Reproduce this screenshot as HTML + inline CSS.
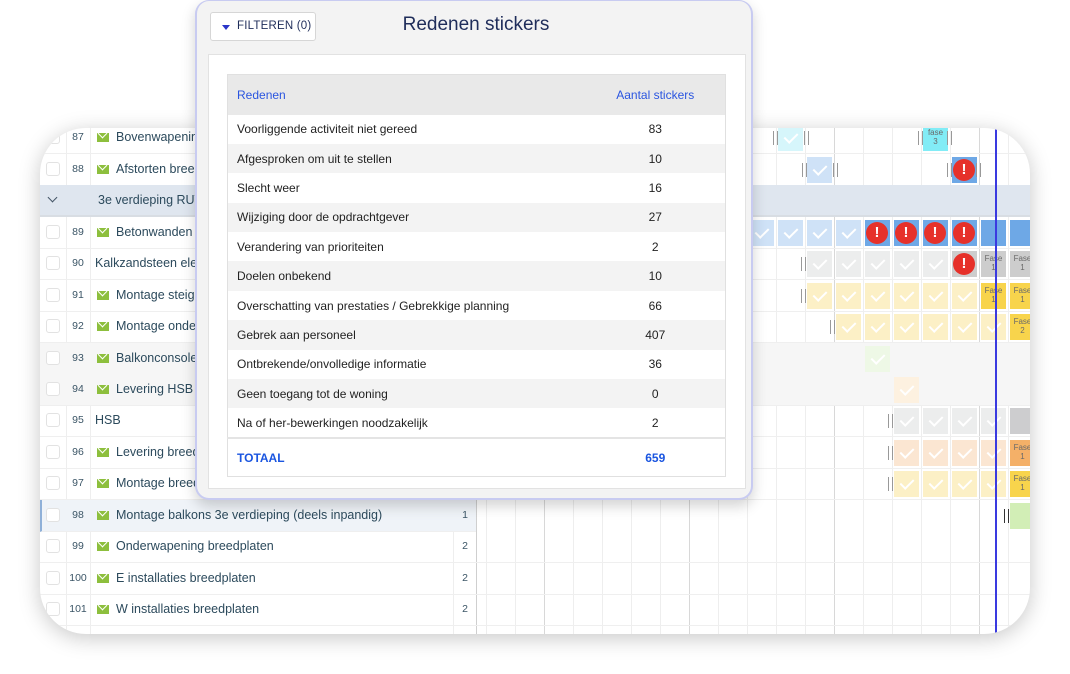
<!DOCTYPE html>
<html><head><meta charset="utf-8">
<style>
*{box-sizing:border-box;margin:0;padding:0}
body{width:1070px;height:674px;background:#fff;position:relative;overflow:hidden;font-family:"Liberation Sans",sans-serif}
.card{position:absolute;left:40px;top:128px;width:990px;height:506px;border-radius:46px;overflow:hidden;background:#fff;box-shadow:0 4px 22px rgba(0,0,0,.22)}
.in{position:absolute;left:-40px;top:-128px;width:1070px;height:674px}
.row{position:absolute;left:40px;width:1000px;height:31.5px;border-bottom:1px solid #efefef}
.row .cb{position:absolute;left:6px;top:8px;width:14px;height:14px;border:1px solid #e2e2e2;border-radius:3px;background:#fff}
.row .n{position:absolute;left:26px;width:24px;top:0;line-height:31px;text-align:center;font-size:10.5px;color:#3b5566}
.row .t{position:absolute;left:55px;top:0;line-height:31px;font-size:12.5px;color:#2c4a5c;white-space:nowrap}
.row .env{position:absolute;left:57px;top:11px;width:12px;height:9px;background:#8dbf3d}
.row .env:after{content:"";position:absolute;left:2px;top:-3px;width:6px;height:6px;border-right:1.3px solid #fff;border-bottom:1.3px solid #fff;transform:rotate(45deg)}
.row .ti{left:76px}
.row .k{position:absolute;left:418px;width:14px;top:0;line-height:31px;font-size:10.5px;color:#3b5566;text-align:center}
.vl{position:absolute;top:128px;height:506px;width:1px;background:#eee}
.vd{background:#d8d8d8}
.c{position:absolute;width:25px;height:26px}
.ck:after{content:"";position:absolute;left:9px;top:5px;width:6px;height:11px;border-right:2.5px solid #fff;border-bottom:2.5px solid #fff;transform:rotate(45deg)}
.ex:after{content:"!";position:absolute;left:1px;top:2px;width:22px;height:22px;border-radius:50%;background:#e6312a;color:#fff;font-weight:bold;font-size:15px;line-height:22px;text-align:center}
.f{font-size:8px;color:#6a6a6a;text-align:center;line-height:9px;padding-top:3px}
.bar{position:absolute;width:5px;height:14px;border-left:1.5px solid #999;border-right:1.5px solid #999}
.modal{position:absolute;left:195px;top:0;width:558px;height:500px;background:#f3f3f3;border:2px solid #c8cbf1;border-top-width:1px;border-radius:0 0 14px 14px;border-top-left-radius:14px;border-top-right-radius:14px;box-shadow:0 6px 14px rgba(0,0,0,.18)}
.btn{position:absolute;left:13px;top:11px;width:106px;height:29px;background:#fff;border:1px solid #d6d6d6;border-radius:3px;font-size:11.5px;color:#1f2d5a;line-height:27px;padding-left:26px;letter-spacing:.2px}
.btn:before{content:"";position:absolute;left:11px;top:12px;border-left:4px solid transparent;border-right:4px solid transparent;border-top:5px solid #2a35c8}
.title{position:absolute;left:0;width:558px;top:13px;text-align:center;font-size:19px;color:#1f2d5a;padding-left:0;text-indent:0}
.panel{position:absolute;left:11px;top:53px;width:538px;height:435px;background:#fff;border:1px solid #e2e2e2}
table{position:absolute;left:18px;top:19px;width:499px;border-collapse:collapse;border:1px solid #e0e0e0;font-size:12px;color:#222}
td{height:29.4px;padding-left:9px}
td.v{text-align:center;width:140px;padding-left:0}
tr.h td{height:40px;background:#e9e9e9;color:#2a55e0}
tr:nth-child(odd):not(.h):not(.tot) td{background:#f3f3f3}
tr.tot td{height:39px;color:#1a55e0;font-weight:bold;border-top:2px solid #e4e4e4;background:#fff}
</style></head><body>
<div class="card"><div class="in">
<!-- gantt grid vertical lines -->
<div class="vl" style="left:476px;background:#cfcfcf"></div>
<div class="vl" style="left:486px"></div><div class="vl" style="left:515px"></div><div class="vl vd" style="left:544px"></div><div class="vl" style="left:573px"></div><div class="vl" style="left:602px"></div><div class="vl" style="left:631px"></div><div class="vl" style="left:660px"></div><div class="vl vd" style="left:689px"></div><div class="vl" style="left:718px"></div><div class="vl" style="left:747px"></div><div class="vl" style="left:776px"></div><div class="vl" style="left:805px"></div><div class="vl vd" style="left:834px"></div><div class="vl" style="left:863px"></div><div class="vl" style="left:892px"></div><div class="vl" style="left:921px"></div><div class="vl" style="left:950px"></div><div class="vl vd" style="left:979px"></div><div class="vl" style="left:1008px"></div>
<div class="vl" style="left:66px"></div><div class="vl" style="left:90px"></div><div class="vl" style="left:453px"></div>

<div class="row" style="top:122px"><div class="cb"></div><div class="n">87</div><div class="env"></div><div class="t ti">Bovenwapening</div></div>
<div class="row" style="top:154px"><div class="cb"></div><div class="n">88</div><div class="env"></div><div class="t ti">Afstorten breedplaten</div></div>
<div class="row" style="top:185px;width:1000px;background:#dfe6ef;border-bottom:2px solid #d8dde3"><div style="position:absolute;left:9px;top:9px;width:7px;height:7px;border-right:1.3px solid #456;border-bottom:1.3px solid #456;transform:rotate(45deg)"></div><div class="t" style="left:58px">3e verdieping RUW</div></div>
<div class="row" style="top:217px"><div class="cb"></div><div class="n">89</div><div class="env"></div><div class="t ti">Betonwanden</div></div>
<div class="row" style="top:248px"><div class="cb"></div><div class="n">90</div><div class="t">Kalkzandsteen elementen</div></div>
<div class="row" style="top:280px"><div class="cb"></div><div class="n">91</div><div class="env"></div><div class="t ti">Montage steigers</div></div>
<div class="row" style="top:311px"><div class="cb"></div><div class="n">92</div><div class="env"></div><div class="t ti">Montage onderslagen</div></div>
<div class="row" style="top:343px;background:#f6f6f6"><div class="cb"></div><div class="n">93</div><div class="env"></div><div class="t ti">Balkonconsoles</div></div>
<div class="row" style="top:374px;background:#f6f6f6"><div class="cb"></div><div class="n">94</div><div class="env"></div><div class="t ti">Levering HSB</div></div>
<div class="row" style="top:405px"><div class="cb"></div><div class="n">95</div><div class="t">HSB</div></div>
<div class="row" style="top:437px"><div class="cb"></div><div class="n">96</div><div class="env"></div><div class="t ti">Levering breedplaten</div></div>
<div class="row" style="top:468px"><div class="cb"></div><div class="n">97</div><div class="env"></div><div class="t ti">Montage breedplaten</div></div>
<div class="row" style="top:500px;width:436px;background:#eff3f8;border-left:2px solid #8fb0d8"><div class="cb" style="left:4px"></div><div class="n" style="left:24px">98</div><div class="env" style="left:55px"></div><div class="t ti" style="left:74px">Montage balkons 3e verdieping (deels inpandig)</div><div class="k" style="left:416px">1</div></div>
<div class="row" style="top:531px"><div class="cb"></div><div class="n">99</div><div class="env"></div><div class="t ti">Onderwapening breedplaten</div><div class="k">2</div></div>
<div class="row" style="top:563px"><div class="cb"></div><div class="n">100</div><div class="env"></div><div class="t ti">E installaties breedplaten</div><div class="k">2</div></div>
<div class="row" style="top:594px"><div class="cb"></div><div class="n">101</div><div class="env"></div><div class="t ti">W installaties breedplaten</div><div class="k">2</div></div>

<!-- row 87 -->
<div class="bar" style="left:773px;top:131px"></div><div class="c ck" style="left:778px;top:125px;background:#d6f6fb"></div><div class="bar" style="left:804px;top:131px"></div>
<div class="bar" style="left:918px;top:131px"></div><div class="c f" style="left:923px;top:125px;background:#82ecf6">fase<br>3</div><div class="bar" style="left:947px;top:131px"></div>
<!-- row 88 -->
<div class="bar" style="left:802px;top:163px"></div><div class="c ck" style="left:807px;top:157px;background:#cfe2f7"></div><div class="bar" style="left:833px;top:163px"></div>
<div class="bar" style="left:947px;top:163px"></div><div class="c ex" style="left:952px;top:157px;background:#6ea8e6"></div><div class="bar" style="left:976px;top:163px"></div>
<!-- row 89 -->
<div class="c ck" style="left:749px;top:220px;background:#cfe2f7"></div><div class="c ck" style="left:778px;top:220px;background:#cfe2f7"></div><div class="c ck" style="left:807px;top:220px;background:#cfe2f7"></div><div class="c ck" style="left:836px;top:220px;background:#cfe2f7"></div>
<div class="c ex" style="left:865px;top:220px;background:#6ea8e6"></div><div class="c ex" style="left:894px;top:220px;background:#6ea8e6"></div><div class="c ex" style="left:923px;top:220px;background:#6ea8e6"></div><div class="c ex" style="left:952px;top:220px;background:#6ea8e6"></div><div class="c" style="left:981px;top:220px;background:#6ea8e6"></div><div class="c" style="left:1010px;top:220px;background:#6ea8e6"></div>
<!-- row 90 -->
<div class="bar" style="left:801px;top:257px"></div>
<div class="c ck" style="left:807px;top:251px;background:#eceded"></div><div class="c ck" style="left:836px;top:251px;background:#eceded"></div><div class="c ck" style="left:865px;top:251px;background:#eceded"></div><div class="c ck" style="left:894px;top:251px;background:#eceded"></div><div class="c ck" style="left:923px;top:251px;background:#eceded"></div><div class="c ex" style="left:952px;top:251px;background:#cdcdcd"></div><div class="c f" style="left:981px;top:251px;background:#cdcdcd">Fase<br>1</div><div class="c f" style="left:1010px;top:251px;background:#cdcdcd">Fase<br>1</div>
<!-- row 91 -->
<div class="bar" style="left:801px;top:289px"></div>
<div class="c ck" style="left:807px;top:283px;background:#fcf0c6"></div><div class="c ck" style="left:836px;top:283px;background:#fcf0c6"></div><div class="c ck" style="left:865px;top:283px;background:#fcf0c6"></div><div class="c ck" style="left:894px;top:283px;background:#fcf0c6"></div><div class="c ck" style="left:923px;top:283px;background:#fcf0c6"></div><div class="c ck" style="left:952px;top:283px;background:#fcf0c6"></div><div class="c f" style="left:981px;top:283px;background:#f8d44c">Fase<br>1</div><div class="c f" style="left:1010px;top:283px;background:#f8d44c">Fase<br>1</div>
<!-- row 92 -->
<div class="bar" style="left:830px;top:320px"></div>
<div class="c ck" style="left:836px;top:314px;background:#fcf0c6"></div><div class="c ck" style="left:865px;top:314px;background:#fcf0c6"></div><div class="c ck" style="left:894px;top:314px;background:#fcf0c6"></div><div class="c ck" style="left:923px;top:314px;background:#fcf0c6"></div><div class="c ck" style="left:952px;top:314px;background:#fcf0c6"></div><div class="c ck" style="left:981px;top:314px;background:#fcf0c6"></div><div class="c f" style="left:1010px;top:314px;background:#f8d44c">Fase<br>2</div>
<!-- row 93,94 -->
<div class="c ck" style="left:865px;top:346px;background:#eef8e6"></div>
<div class="c ck" style="left:894px;top:377px;background:#fdf1e0"></div>
<!-- row 95 -->
<div class="bar" style="left:888px;top:414px"></div>
<div class="c ck" style="left:894px;top:408px;background:#eceded"></div><div class="c ck" style="left:923px;top:408px;background:#eceded"></div><div class="c ck" style="left:952px;top:408px;background:#eceded"></div><div class="c ck" style="left:981px;top:408px;background:#eceded"></div><div class="c" style="left:1010px;top:408px;background:#cdcdcf"></div>
<!-- row 96 -->
<div class="bar" style="left:888px;top:446px"></div>
<div class="c ck" style="left:894px;top:440px;background:#fbe6d2"></div><div class="c ck" style="left:923px;top:440px;background:#fbe6d2"></div><div class="c ck" style="left:952px;top:440px;background:#fbe6d2"></div><div class="c ck" style="left:981px;top:440px;background:#fbe6d2"></div><div class="c f" style="left:1010px;top:440px;background:#f4b068">Fase<br>1</div>
<!-- row 97 -->
<div class="bar" style="left:888px;top:477px"></div>
<div class="c ck" style="left:894px;top:471px;background:#fcf0c6"></div><div class="c ck" style="left:923px;top:471px;background:#fcf0c6"></div><div class="c ck" style="left:952px;top:471px;background:#fcf0c6"></div><div class="c ck" style="left:981px;top:471px;background:#fcf0c6"></div><div class="c f" style="left:1010px;top:471px;background:#f8d44c">Fase<br>1</div>
<!-- row 98 -->
<div class="bar" style="left:1004px;top:509px;border-color:#333"></div><div class="c" style="left:1010px;top:503px;background:#d2eeb6"></div>
<!-- today line -->
<div style="position:absolute;left:995px;top:128px;width:1.5px;height:506px;background:#3a3ae0"></div>
</div></div>

<div class="modal">
<div class="btn">FILTEREN (0)</div>
<div class="title">Redenen stickers</div>
<div class="panel">
<table>
<tr class="h"><td>Redenen</td><td class="v">Aantal stickers</td></tr>
<tr><td>Voorliggende activiteit niet gereed</td><td class="v">83</td></tr>
<tr><td>Afgesproken om uit te stellen</td><td class="v">10</td></tr>
<tr><td>Slecht weer</td><td class="v">16</td></tr>
<tr><td>Wijziging door de opdrachtgever</td><td class="v">27</td></tr>
<tr><td>Verandering van prioriteiten</td><td class="v">2</td></tr>
<tr><td>Doelen onbekend</td><td class="v">10</td></tr>
<tr><td>Overschatting van prestaties / Gebrekkige planning</td><td class="v">66</td></tr>
<tr><td>Gebrek aan personeel</td><td class="v">407</td></tr>
<tr><td>Ontbrekende/onvolledige informatie</td><td class="v">36</td></tr>
<tr><td>Geen toegang tot de woning</td><td class="v">0</td></tr>
<tr><td>Na of her-bewerkingen noodzakelijk</td><td class="v">2</td></tr>
<tr class="tot"><td>TOTAAL</td><td class="v">659</td></tr>
</table>
</div>
</div>
</body></html>
